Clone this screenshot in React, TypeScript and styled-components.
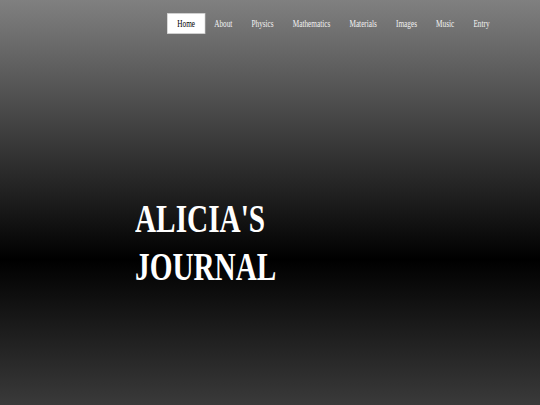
import { FC } from 'react';
import styled, { createGlobalStyle } from 'styled-components';

const GlobalStyle = createGlobalStyle`
  html, body {
    margin: 0;
    padding: 0;
  }

  body {
    font-family: 'Liberation Serif', 'Times New Roman', serif;
    background: #000;
  }
`;

const links = ['Home', 'About', 'Physics', 'Mathematics', 'Materials', 'Images', 'Music', 'Entry'];

const App: FC = () => (
  <>
    <GlobalStyle />
    <Hero>
      <Header>
        <Nav>
          {links.map((label) => (
            <NavLink key={label} href="#" $active={label === 'Home'}>
              {label}
            </NavLink>
          ))}
        </Nav>
      </Header>
      <Title>
        ALICIA'S
        <br />
        JOURNAL
      </Title>
    </Hero>
  </>
);

export default App;

const Hero = styled.section`
  min-height: 100vh;
  box-sizing: border-box;
  overflow: hidden;
  background: linear-gradient(to bottom, #808080 0%, #000 64%, #3a3a3a 100%);
`;

const Header = styled.header`
  display: flex;
  justify-content: flex-end;
  padding: 14px 41px 0 0;
`;

const Nav = styled.nav`
  display: flex;
  transform: scaleX(0.66);
  transform-origin: right center;
`;

const NavLink = styled.a<{ $active?: boolean }>`
  display: block;
  height: 19px;
  line-height: 19px;
  padding: 0 14.5px;
  font-size: 11px;
  text-decoration: none;
  color: ${({ $active }) => ($active ? '#000' : '#f2f2f2')};
  background: ${({ $active }) => ($active ? '#fff' : 'transparent')};
  box-shadow: ${({ $active }) => ($active ? '0 0 0 1px #cfcfcf' : 'none')};
`;

const Title = styled.h1`
  margin: 162px 0 0 135px;
  font-size: 39px;
  line-height: 48px;
  font-weight: 700;
  color: #fff;
  transform: scaleX(0.75);
  transform-origin: left center;
`;
